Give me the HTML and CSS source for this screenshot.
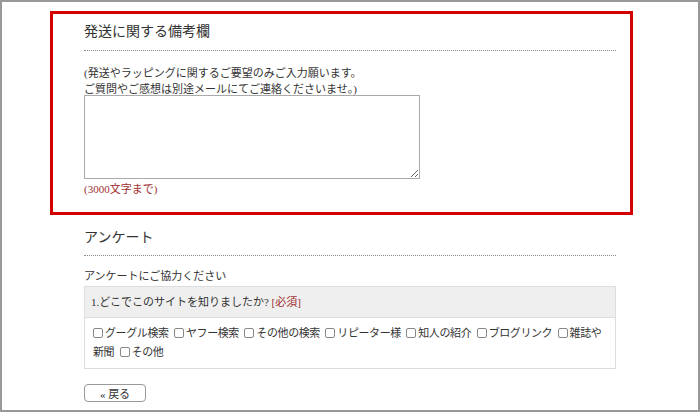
FILE: index.html
```html
<!DOCTYPE html>
<html lang="ja">

<head>
    <meta charset="UTF-8">
    <meta name="viewport" content="width=device-width, initial-scale=1.0">
    <title>発送に関する備考欄</title>
    <link rel="stylesheet" href="styles.css">
</head>

<body>
    <div class="frame">
        <div class="highlight">
            <h2 class="section-title">発送に関する備考欄</h2>
            <p class="note">(発送やラッピングに関するご要望のみご入力願います。<br>ご質問やご感想は別途メールにてご連絡くださいませ。)</p>
            <textarea class="remarks"></textarea>
            <p class="limit">(3000文字まで)</p>
        </div>

        <div class="section">
            <h2 class="section-title">アンケート</h2>
            <p class="lead">アンケートにご協力ください</p>
            <div class="question">
                <div class="question-head">1.どこでこのサイトを知りましたか? <span class="required">[必須]</span></div>
                <div class="question-body">
                    <label><input type="checkbox">グーグル検索</label>
                    <label><input type="checkbox">ヤフー検索</label>
                    <label><input type="checkbox">その他の検索</label>
                    <label><input type="checkbox">リピーター様</label>
                    <label><input type="checkbox">知人の紹介</label>
                    <label><input type="checkbox">ブログリンク</label>
                    <input type="checkbox">雑誌や新聞
                    <label><input type="checkbox">その他</label>
                </div>
            </div>
            <button class="back-button">« 戻る</button>
        </div>
    </div>
</body>

</html>
```

FILE: styles.css
```css
* {
    box-sizing: border-box;
}

body {
    margin: 0;
    font-family: "Liberation Serif", "Noto Sans CJK JP", serif;
    color: #333;
    background: #fff;
}

.frame {
    width: 700px;
    height: 412px;
    border: 2px solid #999;
    overflow: hidden;
}

.highlight {
    margin: 9px 0 0 48px;
    width: 583px;
    border: 3px solid #d30000;
    padding: 8px 14px 15px 31px;
}

.section {
    width: 532px;
    margin: 13px 0 0 82px;
}

.section-title {
    margin: 0;
    font-size: 14px;
    font-weight: normal;
    line-height: 20px;
    padding-bottom: 7px;
    border-bottom: 1px dotted #888;
}

.highlight .section-title {
    padding-bottom: 8px;
}

.note {
    margin: 14px 0 0;
    font-size: 11px;
    line-height: 16px;
}

.remarks {
    display: block;
    width: 336px;
    height: 84px;
    margin: -2px 0 0;
    border: 1px solid #aaa;
    resize: vertical;
}

.limit {
    margin: 2px 0 0;
    font-size: 11px;
    line-height: 16px;
    color: #a03030;
}

.lead {
    margin: 12px 0 0;
    font-size: 11px;
    line-height: 16px;
}

.question {
    margin-top: 2px;
    border: 1px solid #ddd;
    font-size: 11px;
}

.question-head {
    background: #efefef;
    border-bottom: 1px solid #ddd;
    padding: 0 6px;
    line-height: 30px;
}

.required {
    color: #a03030;
}

.question-body {
    padding: 6px 4px 6px 8px;
    line-height: 19px;
    letter-spacing: -0.4px;
}

.question-body input {
    appearance: none;
    width: 10px;
    height: 10px;
    margin: 0 2px 0 3px;
    border: 1px solid #888;
    border-radius: 2px;
    vertical-align: -1px;
    background: #fff;
}

.question-body label:first-child input {
    margin-left: 0;
}

.back-button {
    display: block;
    margin-top: 15px;
    width: 62px;
    height: 18px;
    padding: 0;
    font-family: inherit;
    font-size: 11px;
    color: #333;
    background: #fff;
    border: 1px solid #999;
    border-radius: 4px;
}
```
